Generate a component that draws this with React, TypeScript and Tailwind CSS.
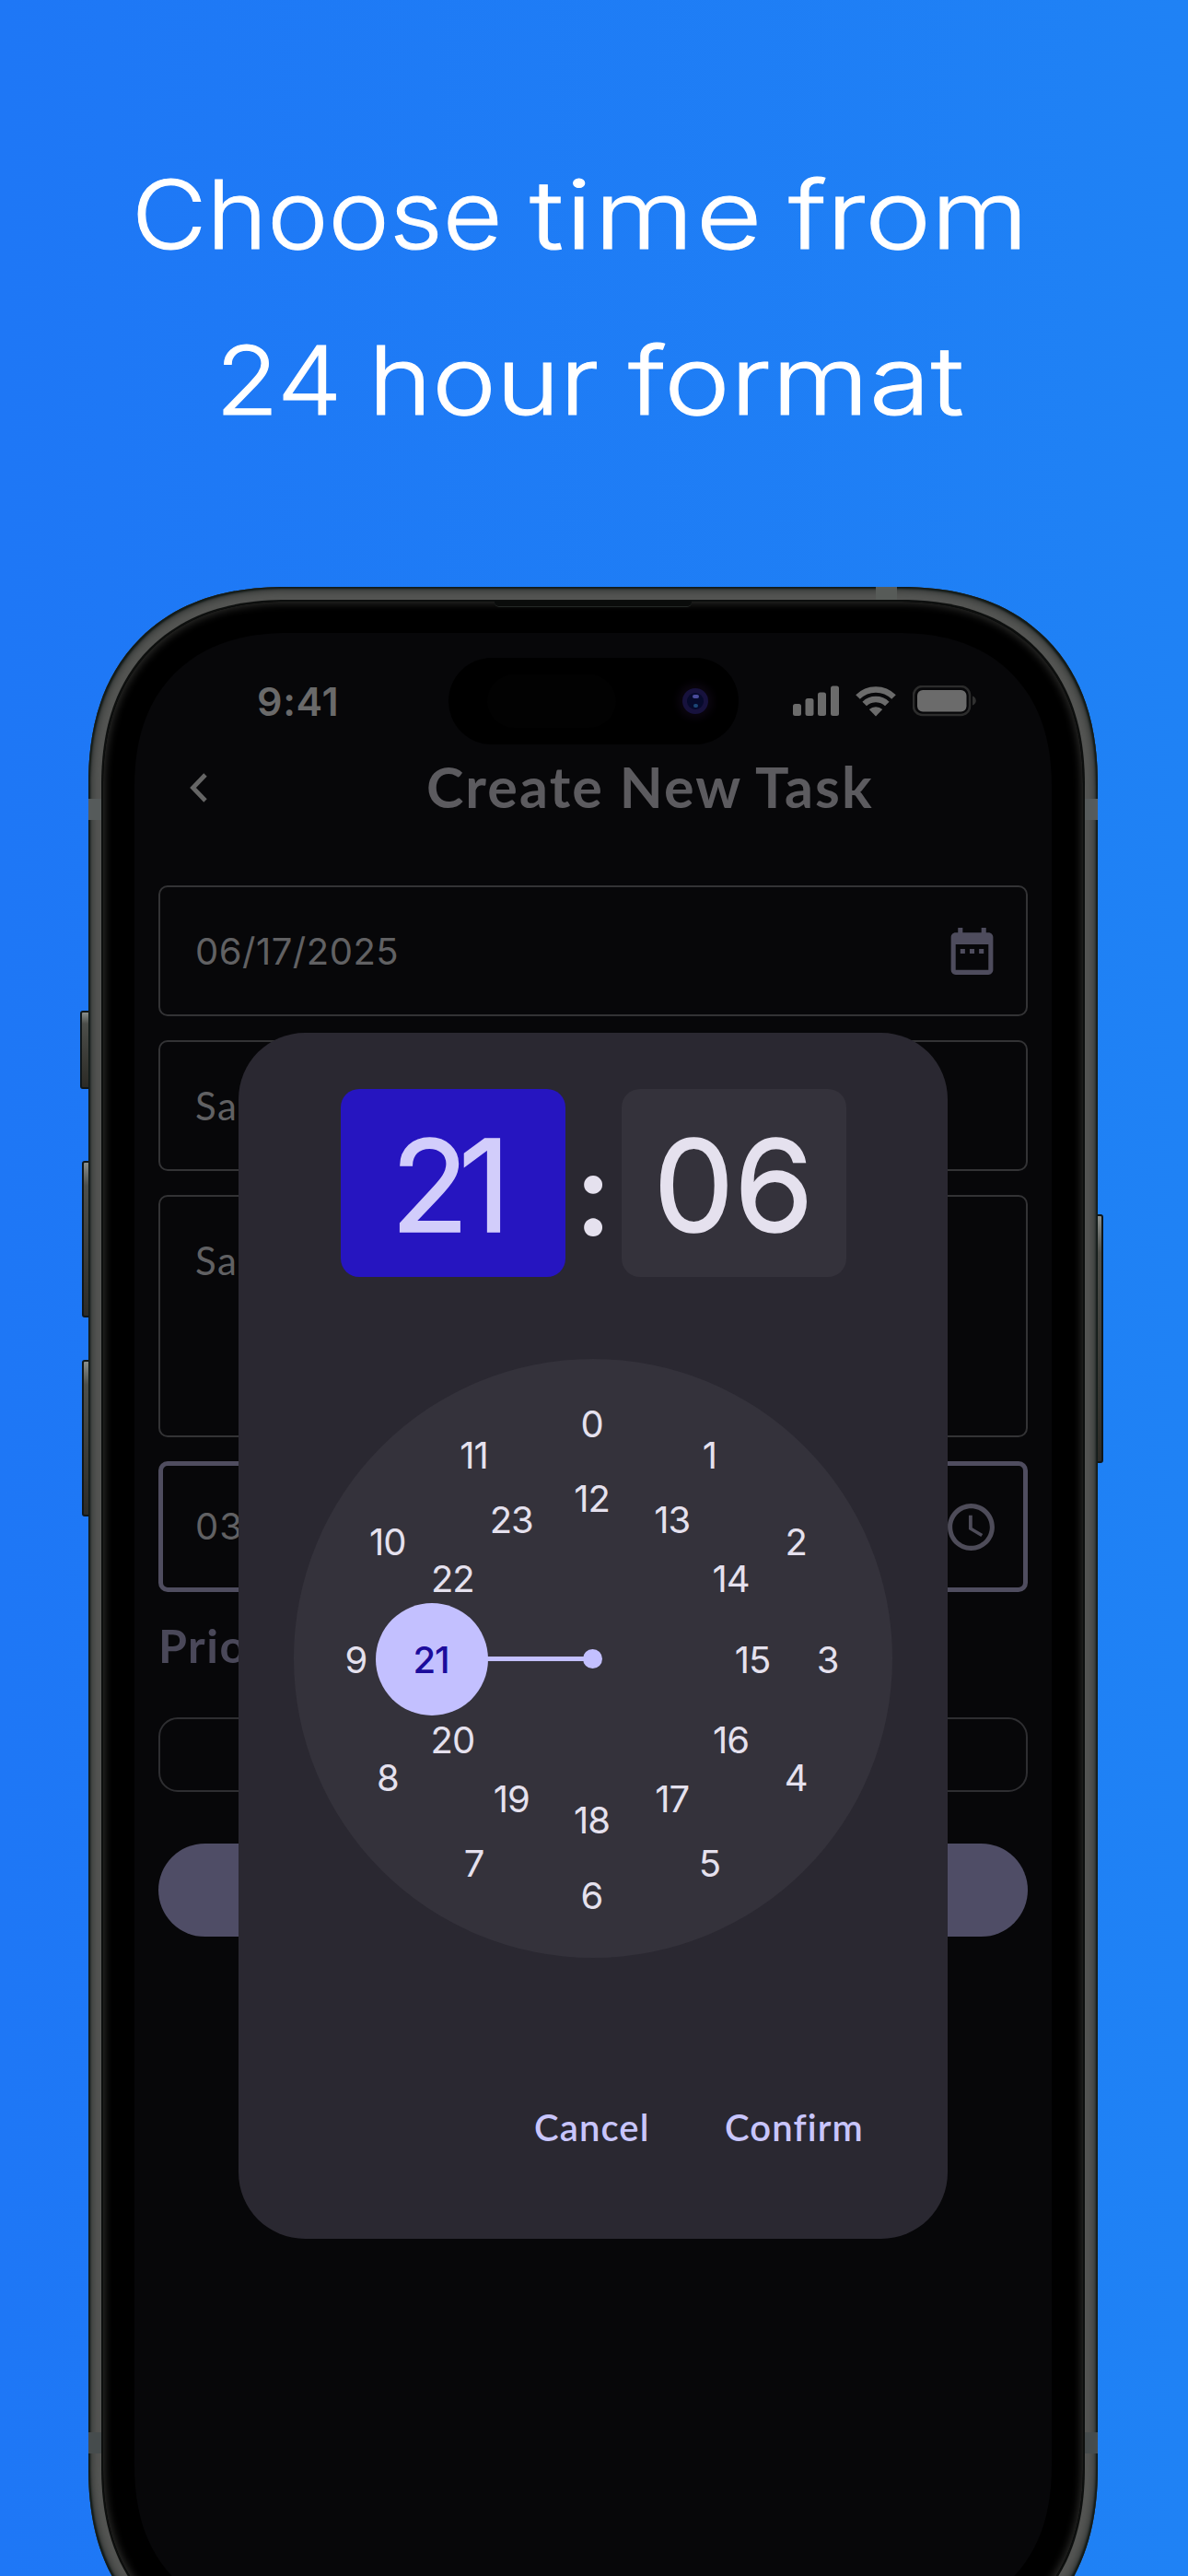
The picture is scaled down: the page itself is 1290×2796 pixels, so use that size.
import React from "react";
import { MdDateRange, MdSchedule } from "react-icons/md";

const DIAL = 650;
const OUTER_RADIUS = 256;
const INNER_RADIUS = 174.5;
const SELECTED_HOUR = 21;

const hours = Array.from({ length: 24 }, (_, hour) => {
  const radius = hour < 12 ? OUTER_RADIUS : INNER_RADIUS;
  const angle = ((hour % 12) * Math.PI) / 6;
  return {
    hour,
    left: DIAL / 2 + radius * Math.sin(angle) - 1.5,
    top: DIAL / 2 - radius * Math.cos(angle) + 1.5,
  };
});

function StatusBar() {
  return (
    <div className="flex h-[146px] items-start justify-between pl-[133px] pr-[81px] pt-[48px]">
      <div className="font-[Inter,sans-serif] text-[43px] font-semibold leading-[52px] tracking-[0.7px] text-[#6a6a6a]">
        9:41
      </div>
      <div className="mt-[9px] flex items-start text-[#6b6b6b]">
        <svg width="50" height="34" viewBox="0 0 50 34" fill="currentColor">
          <rect x="0" y="20" width="9" height="13" rx="2.5" />
          <rect x="13.5" y="14" width="9" height="19" rx="2.5" />
          <rect x="27" y="7.5" width="9" height="25.5" rx="2.5" />
          <rect x="41" y="0.5" width="9" height="32.5" rx="2.5" />
        </svg>
        <svg className="ml-[18px]" width="44" height="34" viewBox="0 0 44 34" fill="none" stroke="currentColor">
          <path d="M2.5 12.5 A27.5 27.5 0 0 1 41.5 12.5" strokeWidth="6.5" />
          <path d="M9.7 20 A17.5 17.5 0 0 1 34.3 20" strokeWidth="6.5" />
          <path d="M22 33.5 L14.8 26 A10.5 10.5 0 0 1 29.2 26 Z" fill="currentColor" stroke="none" />
        </svg>
        <svg className="ml-[18px]" width="70" height="34" viewBox="0 0 70 34" fill="none">
          <rect x="1" y="1" width="61" height="31" rx="9.5" stroke="#2c2c2c" strokeWidth="2.5" />
          <rect x="5" y="5" width="53.5" height="23.5" rx="6" fill="currentColor" />
          <path d="M65 11.5 C70 13 70 20 65 21.5 Z" fill="#303030" />
        </svg>
      </div>
    </div>
  );
}

function DynamicIsland() {
  return (
    <div className="absolute left-[341px] top-[27px] flex h-[94px] w-[315px] items-center justify-between rounded-full bg-black pl-[42px] pr-[33px]">
      <div className="h-[58px] w-[140px] rounded-full bg-[#020202]" />
      <div className="flex size-[28px] items-center justify-center rounded-full bg-[#17123d] shadow-[0_0_8px_5px_#0b0610]">
        <div className="flex size-[18px] flex-col items-center justify-between rounded-full bg-[#060a2c] py-[2px]">
          <div className="h-[4px] w-[7px] rounded-full bg-[#4a4c9c]" />
          <div className="h-[4px] w-[5px] rounded-full bg-[#1c4676]" />
        </div>
      </div>
    </div>
  );
}

function TitleBar() {
  return (
    <div className="flex h-[128px] items-start">
      <svg className="ml-[58px] mt-[5px]" width="24" height="34" viewBox="0 0 24 34" fill="none">
        <path d="M19 3 L5.5 17 L19 31" stroke="#656565" strokeWidth="4.8" />
      </svg>
      <h2 className="ml-[235px] mt-[-16px] whitespace-nowrap text-[61px] font-bold leading-[74px] tracking-[2.1px] text-[#5c5b5f]">
        Create New Task
      </h2>
    </div>
  );
}

function TaskForm() {
  return (
    <div className="flex flex-col px-[26px] text-[42px] leading-[50px] tracking-[1.5px] text-[#616163]">
      <div className="flex h-[142px] items-center justify-between rounded-[10px] border-[2.5px] border-[#333335] pl-[38px] pr-[28px]">
        <span className="mt-px font-[Inter,sans-serif] text-[40px] tracking-[0.5px]">06/17/2025</span>
        <MdDateRange className="size-[61px] text-[#4e4c5d]" />
      </div>
      <div className="mt-[26px] flex h-[142px] items-center rounded-[10px] border-[2.5px] border-[#333335] pl-[38px]">Sample</div>
      <div className="mt-[26px] flex h-[263px] items-start rounded-[10px] border-[2.5px] border-[#333335] pl-[38px] pt-[44px]">Sample</div>
      <div className="mt-[26px] flex h-[142px] items-center justify-between rounded-[10px] border-[5px] border-[#4f4d5f] pl-[35px] pr-[26px]">
        <span className="font-[Inter,sans-serif] text-[40px] tracking-[1px]">03:06</span>
        <MdSchedule className="size-[61px] text-[#4e4c59]" />
      </div>
      <div className="mt-[28px] text-[50px] font-bold leading-[60px] text-[#4a4859]">Priority</div>
      <div className="mt-[48px] h-[81px] rounded-[21px] border-[2.5px] border-[#2e2e31]" />
      <div className="mt-[56px] h-[101px] rounded-full bg-[#4f4d66]" />
    </div>
  );
}

function ClockDial() {
  return (
    <div className="relative mt-[89px] size-[650px] rounded-full bg-[#34323b]">
      <div className="absolute left-[150px] top-[323px] h-[5px] w-[175px] bg-[#c3c0ff]" />
      <div className="absolute left-[314px] top-[315px] size-[21px] rounded-full bg-[#c3c0ff]" />
      <div className="absolute left-[89px] top-[265px] size-[122px] rounded-full bg-[#c3c0ff]" />
      {hours.map(({ hour, left, top }) => (
        <span
          key={hour}
          className={
            "absolute -translate-x-1/2 -translate-y-1/2 font-[Inter,sans-serif] text-[40px] leading-[48px] tracking-[-1px] " +
            (hour === SELECTED_HOUR ? "font-medium text-[#1c0c9c]" : "text-[#e5e1ee]")
          }
          style={{ left, top }}
        >
          {hour}
        </span>
      ))}
    </div>
  );
}

function TimePicker() {
  return (
    <div className="absolute left-[113px] top-[434px] flex h-[1309px] w-[770px] flex-col items-center rounded-[72px] bg-[#2a2831]">
      <div className="mt-[61px] flex h-[204px] font-[Inter,sans-serif] text-[139px] leading-[209px]">
        <div className="w-[244px] rounded-[20px] bg-[#2615c0] text-center text-[#d2cdfb] [-webkit-text-stroke:1.5px_#d2cdfb]">
          <span className="-ml-[15px] tracking-[-11px]">21</span>
        </div>
        <div className="relative top-[19px] w-[61px] text-center font-[Lato,sans-serif] text-[131px] font-bold leading-[180px] text-[#e5e1ee]">:</div>
        <div className="w-[244px] rounded-[20px] bg-[#34323b] text-center text-[#e5e1ee] [-webkit-text-stroke:1.5px_#e5e1ee]">06</div>
      </div>
      <ClockDial />
      <div className="mt-[159px] flex self-stretch pl-[321px] text-[40px] font-semibold leading-[50px] tracking-[1.1px] text-[#c8c5fc]">
        <button className="w-[207px] text-left">Cancel</button>
        <button className="text-left">Confirm</button>
      </div>
    </div>
  );
}

function SideButton({ className }: { className: string }) {
  return (
    <div
      className={
        "absolute border-2 border-[#10171a] bg-linear-to-b from-[#8a8f8c] via-[#4c4e4a] via-15% to-[#2c2b26] " + className
      }
    />
  );
}

function Phone() {
  return (
    <div className="relative ml-[96px] mt-[133px] h-[2256px] w-[1096px] shrink-0">
      <SideButton className="left-[-9px] top-[460px] h-[85px] w-[12px] rounded-l-[3px]" />
      <SideButton className="left-[-7px] top-[623px] h-[170px] w-[10px] rounded-l-[3px]" />
      <SideButton className="left-[-7px] top-[839px] h-[170px] w-[10px] rounded-l-[3px]" />
      <SideButton className="right-[-6px] top-[681px] h-[270px] w-[10px] rounded-r-[3px]" />
      <div className="relative h-full overflow-hidden rounded-[215px] bg-[#545553] p-[14px] shadow-[inset_0_0_2px_2px_#111a18,inset_0_0_9px_3px_#2a2e2d] [corner-shape:superellipse(1.2)]">
        <div className="absolute left-[855px] top-0 h-[14px] w-[23px] bg-[#575b58]" />
        <div className="absolute left-0 top-[230px] h-[23px] w-[14px] bg-[#565b5b]" />
        <div className="absolute right-0 top-[230px] h-[23px] w-[14px] bg-[#565b5b]" />
        <div className="absolute left-0 top-[2003px] h-[23px] w-[14px] bg-[#464c4d]" />
        <div className="absolute right-0 top-[2003px] h-[23px] w-[14px] bg-[#464c4d]" />
        <div className="relative h-full rounded-[202px] border-2 border-[#0d0f0e] bg-black px-[34px] pt-[34px] pb-[34px] shadow-[inset_0_0_9px_2px_#2b2b29] [corner-shape:superellipse(1.2)]">
          <div className="absolute left-[425px] top-[-1px] h-[7px] w-[214px] rounded-b-[5px] border-b border-[#242826] bg-[#0a0c0b]" />
          <div className="relative h-full overflow-hidden rounded-[168px] bg-[#070709] [corner-shape:superellipse(1.2)]">
            <StatusBar />
            <DynamicIsland />
            <TitleBar />
            <TaskForm />
            <TimePicker />
          </div>
        </div>
      </div>
    </div>
  );
}

export default function App() {
  return (
    <div className="flex h-[2796px] w-[1290px] flex-col overflow-hidden bg-linear-to-r from-[#1e77f6] to-[#1f82f5] font-[Lato,sans-serif]">
      <h1 className="h-[504px] shrink-0 whitespace-nowrap pt-[143px] font-[Inter,sans-serif] text-[103px] font-light leading-[180px] text-white [-webkit-text-stroke:1px_white]">
        <span className="flex pl-[143px]">
          <span className="w-[432px] origin-left scale-x-[1.086]">Choose </span>
          <span className="w-[281px] origin-left scale-x-[1.2] tracking-[2px]">time </span>
          <span className="w-[260px] origin-left scale-x-[1.175]">from</span>
        </span>
        <span className="flex pl-[234px]">
          <span className="w-[166px] origin-left scale-x-[1.086]">24 </span>
          <span className="w-[282px] origin-left scale-x-[1.14]">hour </span>
          <span className="w-[372px] origin-left scale-x-[1.17] tracking-[0.5px]">format</span>
        </span>
      </h1>
      <Phone />
    </div>
  );
}
